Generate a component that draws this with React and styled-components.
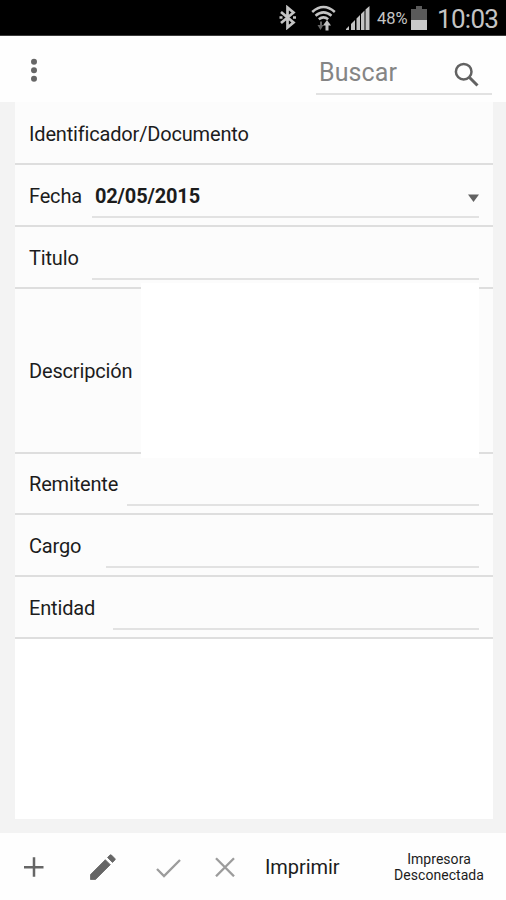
import React from "react";
import styled, { createGlobalStyle } from "styled-components";

const GlobalStyle = createGlobalStyle`
  * { box-sizing: border-box; }
  body { margin: 0; background: #f3f3f3; font-family: Roboto, "Liberation Sans", sans-serif; color: #1c1c1c; }
`;

const Screen = styled.div`
  width: 506px;
  height: 900px;
  display: flex;
  flex-direction: column;
  overflow: hidden;
  background: #f3f3f3;
`;

const StatusBar = styled.header`
  height: 36px;
  flex: none;
  display: flex;
  align-items: center;
  justify-content: flex-end;
  padding: 0 8px 0 0;
  background: #000;
  color: #c4c4c4;
  border-bottom: 1px solid #3c3c3c;
`;

const StatusIcon = styled.svg`
  flex: none;
  display: block;
  margin-right: ${(p) => p.$gap}px;
`;

const BatteryText = styled.span`
  width: 32px;
  margin-right: 2px;
  font-size: 16.5px;
  letter-spacing: 0;
  white-space: nowrap;
  padding-top: 2px;
`;

const Clock = styled.time`
  width: 61px;
  font-size: 26px;
  line-height: 36px;
  letter-spacing: -0.7px;
  white-space: nowrap;
  padding-top: 2px;
`;

const Toolbar = styled.div`
  height: 66px;
  flex: none;
  display: flex;
  justify-content: space-between;
  align-items: flex-start;
  padding: 14px 14px 0 24px;
  background: #fefefe;
`;

const IconButton = styled.button`
  display: flex;
  align-items: center;
  justify-content: center;
  width: ${(p) => p.$w}px;
  height: 40px;
  margin: 0 ${(p) => p.$gap || 0}px 0 0;
  padding: 0;
  border: 0;
  background: none;
  color: ${(p) => (p.$muted ? "#9c9c9c" : "#666")};
`;

const SearchBox = styled.label`
  width: 176px;
  height: 45px;
  display: flex;
  align-items: center;
  justify-content: space-between;
  padding: 5px 13px 0 3px;
  border-bottom: 2px solid #e2e2e2;
`;

const SearchText = styled.span`
  margin-top: -2px;
  font-size: 25px;
  line-height: 30px;
  letter-spacing: 0.1px;
  color: #858585;
`;

const Panel = styled.main`
  height: 717px;
  flex: none;
  margin: 0 13px 14px 15px;
  background: #fff;
`;

const Row = styled.div`
  height: ${(p) => p.$h}px;
  display: flex;
  align-items: stretch;
  padding: 0 14px;
  background: #fcfcfc;
  border-bottom: 2px solid #dedede;
`;

const Label = styled.span`
  width: ${(p) => p.$w}px;
  flex: none;
  display: flex;
  align-items: center;
  padding-top: ${(p) => p.$drop ?? 2}px;
  font-size: 20px;
  letter-spacing: -0.17px;
  white-space: nowrap;
`;

const Field = styled.div`
  flex: 1;
  display: flex;
  align-items: center;
  justify-content: space-between;
  margin-bottom: 7px;
  padding: 11px 0 0 3px;
  border-bottom: 2px solid #e2e2e2;
`;

const DateValue = styled.span`
  font-size: 20px;
  font-weight: 700;
  letter-spacing: -0.17px;
`;

const DropArrow = styled.svg`
  display: block;
  margin-top: 3px;
`;

const TextArea = styled.div`
  flex: 1;
  margin: -6px 0;
  background: #fff;
`;

const ActionBar = styled.footer`
  flex: 1;
  display: flex;
  align-items: flex-start;
  padding: 14px 0 0 18px;
  background: #fefefe;
`;

const PrintAction = styled.span`
  width: 112px;
  font-size: 20px;
  line-height: 40px;
  letter-spacing: -0.07px;
`;

const PrinterState = styled.span`
  width: 124px;
  padding-top: 4px;
  font-size: 14px;
  line-height: 16px;
  letter-spacing: 0.04px;
  text-align: center;
`;

const Bluetooth = () => (
  <StatusIcon $gap={14} width="18" height="25" viewBox="0 0 18 25" fill="none" stroke="currentColor" strokeWidth="2.700">
    <path d="M2 7 14.500 17.500 8.500 22.500v-20L14.500 7.500 2 18" />
    <path d="M0.500 12.500h3M14 12.500h3" />
  </StatusIcon>
);

const Wifi = () => (
  <StatusIcon $gap={10} width="25" height="26" viewBox="0 0 25 26" fill="none" stroke="currentColor" strokeWidth="2.500">
    <path d="M1.200 7Q12.500 -3 23.800 7M4.500 10.800Q12.500 4 20.500 10.800M7.800 14.300Q12.500 10.500 17.200 14.300" />
    <path d="M10 16.500v5" stroke="#666" strokeWidth="2" />
    <path d="M6.500 20h6l-3 5z" fill="#666" stroke="none" />
    <path d="M16 25.500v-6" strokeWidth="3" />
    <path d="M12 20.500h8L16 15z" fill="currentColor" stroke="none" />
  </StatusIcon>
);

const Signal = () => (
  <StatusIcon $gap={7} width="24" height="24" viewBox="0 0 24 24" fill="currentColor">
    <path d="M0 24v-1l3-3V24zM5 24v-6l4-4v10zM10.500 24V12.500l3.500-3.500v15zM15 24V8l3.500-3.500V24zM19.500 24V3.500l4-3.500v24z" />
  </StatusIcon>
);

const Battery = () => (
  <StatusIcon $gap={10} width="16" height="24" viewBox="0 0 16 24">
    <path d="M0 3h5V0h6v3h5v21H0z" fill="#5a5a5a" />
    <path d="M0 14h16v10H0z" fill="#cacaca" />
  </StatusIcon>
);

export default function App() {
  return (
    <>
      <GlobalStyle />
      <Screen>
        <StatusBar>
          <Bluetooth />
          <Wifi />
          <Signal />
          <BatteryText>48%</BatteryText>
          <Battery />
          <Clock>10:03</Clock>
        </StatusBar>
        <Toolbar>
          <IconButton $w={20} aria-label="Menú">
            <svg width="8" height="26" viewBox="0 0 8 26" fill="currentColor">
              <circle cx="4" cy="4.800" r="3" />
              <circle cx="4" cy="13.300" r="3" />
              <circle cx="4" cy="21.800" r="3" />
            </svg>
          </IconButton>
          <SearchBox>
            <SearchText>Buscar</SearchText>
            <svg width="25" height="25" viewBox="0 0 25 25" fill="none" stroke="#626262">
              <circle cx="9.700" cy="9.700" r="7.800" strokeWidth="2.500" />
              <path d="m15 15 8.500 8.500" strokeWidth="3" />
            </svg>
          </SearchBox>
        </Toolbar>
        <Panel>
          <Row $h={63}>
            <Label $w={230}>Identificador/Documento</Label>
          </Row>
          <Row $h={62}>
            <Label $w={63}>Fecha</Label>
            <Field>
              <DateValue>02/05/2015</DateValue>
              <DropArrow width="11" height="8" viewBox="0 0 11 8" fill="#626262">
                <path d="M0 .5h11L5.500 8z" />
              </DropArrow>
            </Field>
          </Row>
          <Row $h={62}>
            <Label $w={63}>Titulo</Label>
            <Field />
          </Row>
          <Row $h={165}>
            <Label $w={112} $drop={0}>Descripción</Label>
            <TextArea />
          </Row>
          <Row $h={61}>
            <Label $w={98} $drop={1}>Remitente</Label>
            <Field />
          </Row>
          <Row $h={62}>
            <Label $w={77}>Cargo</Label>
            <Field />
          </Row>
          <Row $h={62}>
            <Label $w={84}>Entidad</Label>
            <Field />
          </Row>
        </Panel>
        <ActionBar>
          <IconButton $w={32} $gap={37} aria-label="Añadir">
            <svg width="20" height="20" viewBox="0 0 20 20" stroke="currentColor" strokeWidth="2.500">
              <path d="M10 .3v19.500M0 10.300h19.500" />
            </svg>
          </IconButton>
          <IconButton $w={32} $gap={33} aria-label="Editar">
            <svg width="26" height="26" viewBox="0 0 26 26" fill="currentColor" stroke="currentColor" strokeWidth=".8" strokeLinejoin="round">
              <path d="M.5 25.500v-5L15.300 5.700 20.300 10.700 5.500 25.500zM17.500 3.500 19.900 1.100q.8-.8 1.600 0L24.900 4.500q.8.8 0 1.600L22.500 8.500z" />
            </svg>
          </IconButton>
          <IconButton $w={32} $gap={25} $muted aria-label="Aceptar">
            <svg width="25" height="22" viewBox="0 0 25 22" fill="none" stroke="currentColor" strokeWidth="2.300">
              <path d="m1 13 7 7L24 4" />
            </svg>
          </IconButton>
          <IconButton $w={32} $gap={24} $muted aria-label="Cancelar">
            <svg width="20" height="20" viewBox="0 0 20 20" stroke="currentColor" strokeWidth="2.300">
              <path d="m1 1.300 18 18M19 1.300 1 19.300" />
            </svg>
          </IconButton>
          <PrintAction>Imprimir</PrintAction>
          <PrinterState>
            Impresora
            <br />
            Desconectada
          </PrinterState>
        </ActionBar>
      </Screen>
    </>
  );
}
